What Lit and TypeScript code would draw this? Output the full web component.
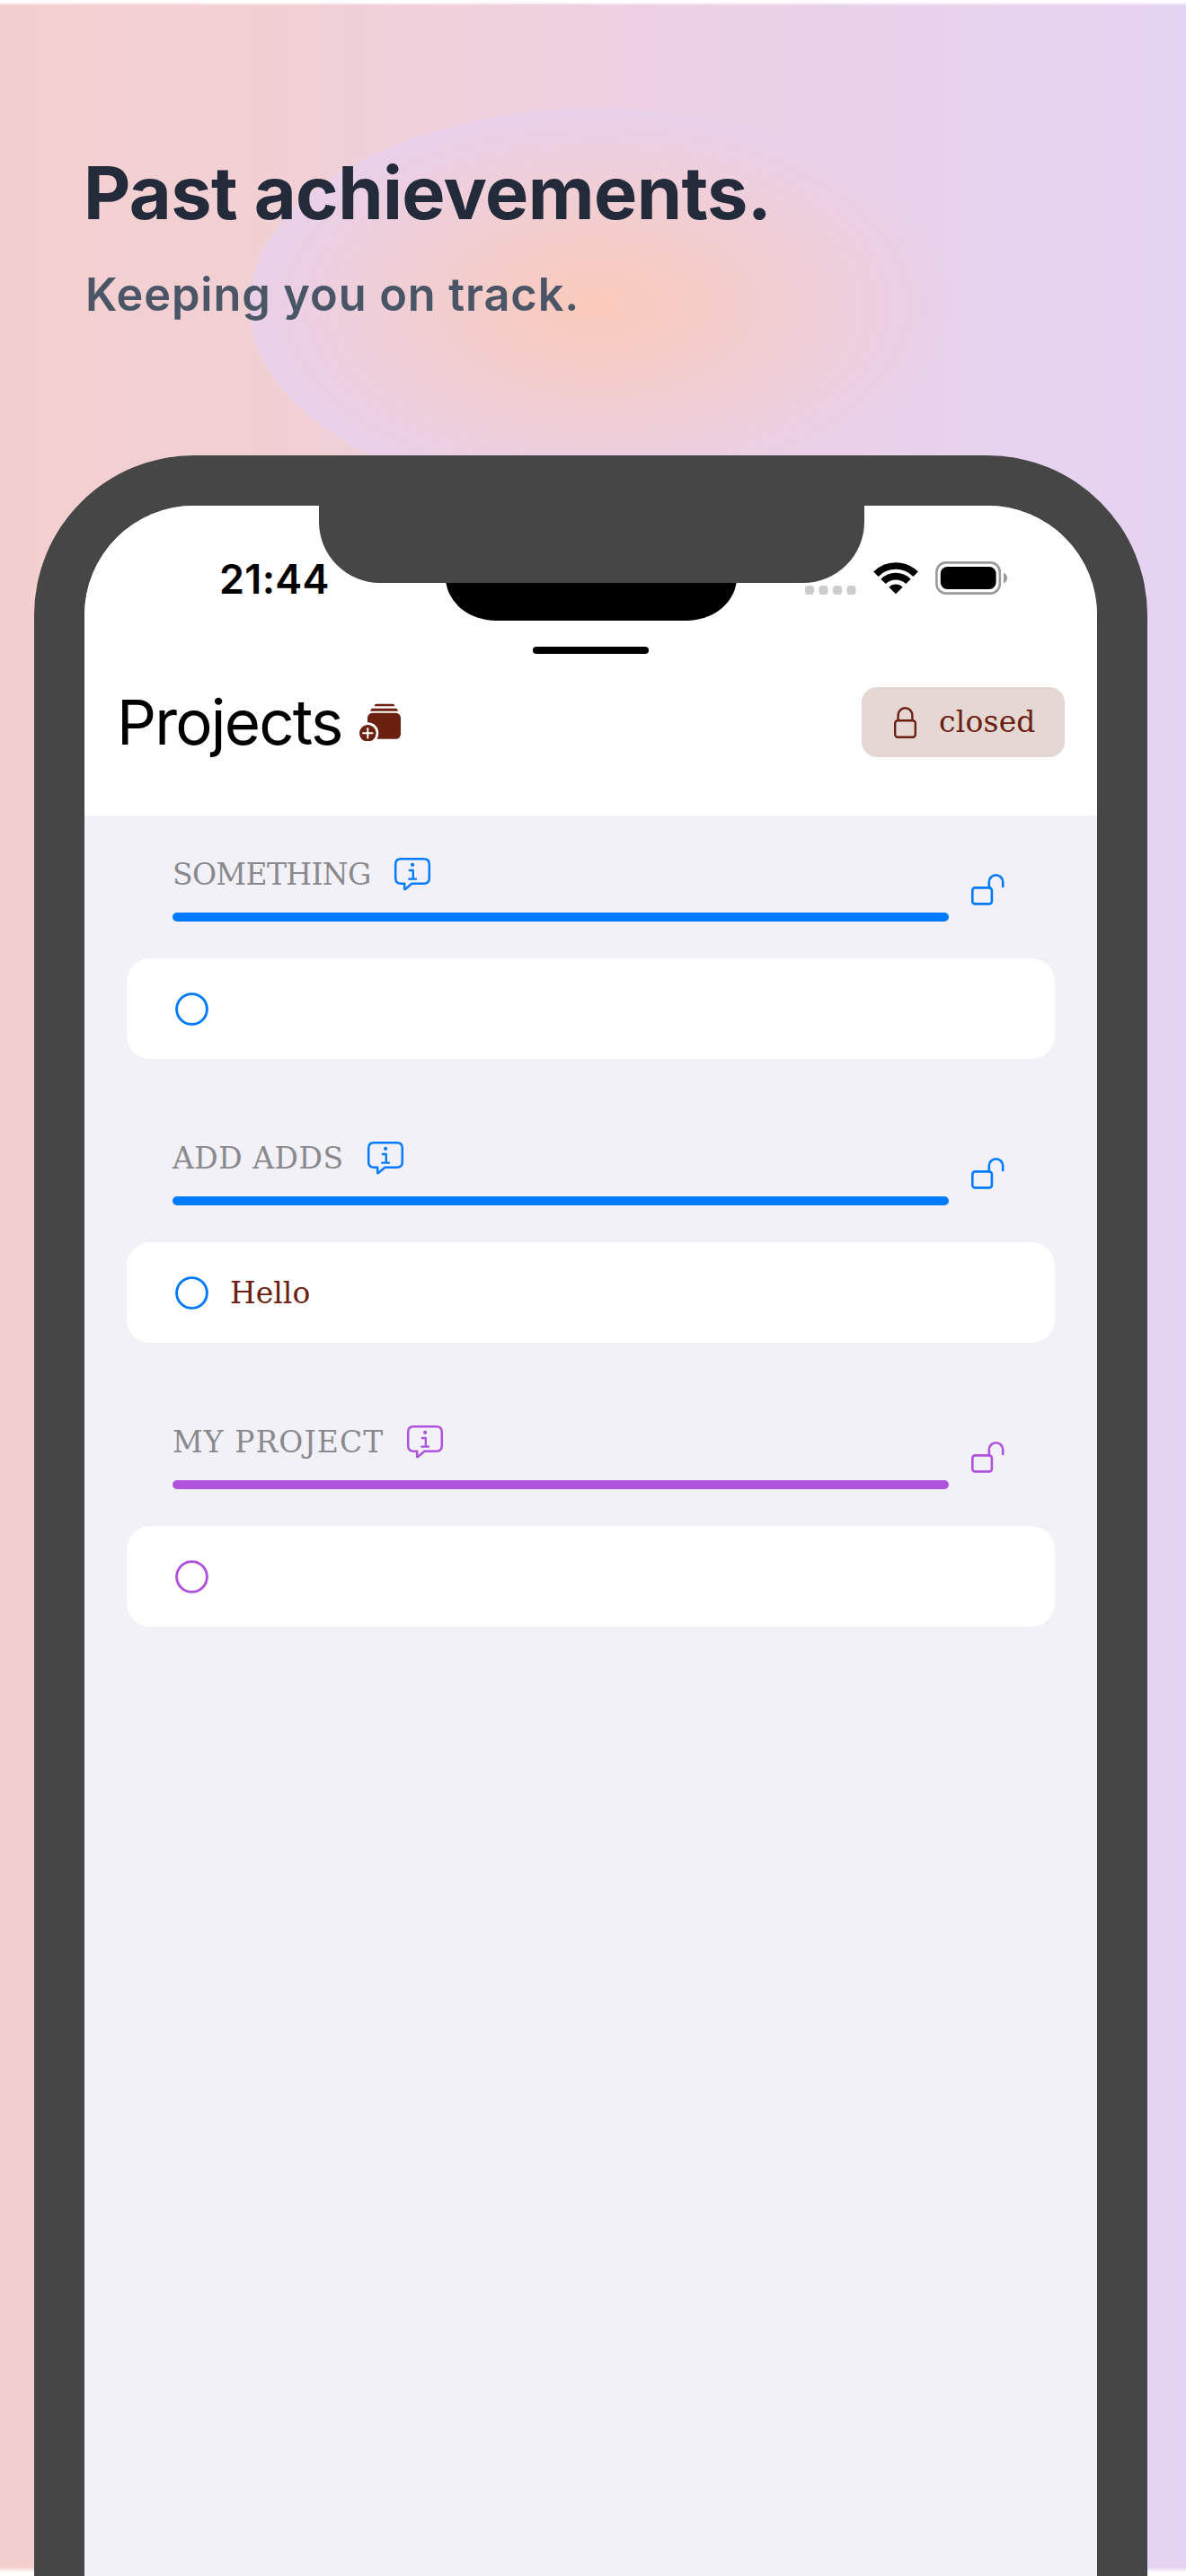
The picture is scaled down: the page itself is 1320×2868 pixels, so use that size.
import { LitElement, html, css, svg } from "lit";
import { customElement, property } from "lit/decorators.js";

interface Project {
  name: string;
  spacing: string;
  color: string;
  item: string;
}

const PROJECTS: Project[] = [
  { name: "SOMETHING", spacing: "-0.65px", color: "#007aff", item: "" },
  { name: "ADD ADDS", spacing: "0.5px", color: "#007aff", item: "Hello" },
  { name: "MY PROJECT", spacing: "1.05px", color: "#af52de", item: "" },
];

const stackPlus = html`<svg width="48" height="44" viewBox="0 0 48 44">
  <g fill="#6b2010">
    <path d="M19 4.4q0-1.6 1.6-1.6h18.8q1.6 0 1.6 1.6v.9H19z" />
    <path d="M14.3 10.7q.3-3 2.6-3h25.4q2.3 0 2.6 3z" />
    <rect x="11" y="12.8" width="37" height="29" rx="5.5" />
    <circle cx="11.3" cy="35.3" r="12" fill="#fff" />
    <circle cx="11.3" cy="35.3" r="9.3" />
  </g>
  <path d="M11.3 30v10.6M6 35.3h10.6" stroke="#fff" stroke-width="2" stroke-linecap="round" />
</svg>`;

const lockClosed = html`<svg width="25" height="35" viewBox="0 0 25 35" fill="none" stroke="#6b2010" stroke-width="2.4">
  <rect x="1.2" y="15.2" width="22.6" height="18.6" rx="3" />
  <path d="M4.6 15.2V9.6a7.9 8.4 0 0 1 15.8 0v5.6" />
</svg>`;

const lockOpen = svg`<rect x="1.3" y="15.4" width="21.6" height="18" rx="3" />
  <path d="M19.8 15.4V8.9a7.7 7.7 0 0 1 15.4 0v5" stroke-linecap="round" />`;

@customElement("project-section")
export class ProjectSection extends LitElement {
  @property({ attribute: false }) project!: Project;

  static styles = css`
    :host { display: block; }
    .head { display: flex; align-items: center; padding: 0 103px 0 98px; gap: 25px; }
    .info { width: 864px; }
    .label { display: flex; align-items: center; height: 36px; gap: 26px; }
    .name {
      font: 33px/36px "DejaVu Serif", serif;
      color: #8a8a8e;
      white-space: nowrap;
      padding-top: 2px;
    }
    .bar { height: 10px; border-radius: 5px; margin-top: 25px; background: currentColor; }
    .card {
      display: flex; align-items: center; gap: 24px;
      margin: 41px 47px 0 46.5px; height: 112px; padding-left: 54.5px;
      border-radius: 26px; background: #fff; box-sizing: border-box;
    }
    .item {
      font: 33px/40px "DejaVu Serif", serif;
      color: #6b2010;
      padding-top: 1px;
    }
    svg { display: block; flex: none; overflow: visible; }
  `;

  render() {
    const p = this.project;
    return html`
      <div class="head" style="color:${p.color}">
        <div class="info">
          <div class="label">
            <span class="name" style="letter-spacing:${p.spacing}">${p.name}</span>
            <svg width="40" height="36" viewBox="0 0 40 36" fill="none" stroke="currentColor" stroke-width="2.5" stroke-linecap="round" stroke-linejoin="round">
              <path d="M7.2 1.3h25.4q6.2 0 6.2 6.2v15q0 6.2-6.2 6.2H19.4l-7.2 6.2q-1 .7-1-.5v-5.7h-4q-6 0-6-6.2v-15q0-6.2 6-6.2z" />
              <path d="M16.8 14h4v9.7M16.2 23.7h7.8" stroke-width="2.3" />
              <circle cx="20.1" cy="7.8" r="2.1" fill="currentColor" stroke="none" />
            </svg>
          </div>
          <div class="bar"></div>
        </div>
        <svg width="37" height="35" viewBox="0 0 37 35" fill="none" stroke="currentColor" stroke-width="2.6">${lockOpen}</svg>
      </div>
      <div class="card" style="color:${p.color}">
        <svg width="37" height="37" viewBox="0 0 37 37"><circle cx="18.5" cy="18.5" r="16.9" fill="none" stroke="currentColor" stroke-width="2.9" /></svg>
        <span class="item">${p.item}</span>
      </div>
    `;
  }
}

@customElement("app-root")
export class AppRoot extends LitElement {
  static styles = css`
    :host {
      display: block; width: 1320px; height: 2868px; overflow: hidden;
      font-family: Inter, "Liberation Sans", sans-serif;
    }
    .page {
      display: flex; flex-direction: column; height: 2868px; overflow: hidden;
      background:
        linear-gradient(#fff 0, #fffafd 3px, #fff0 6px),
        linear-gradient(#fff0 2858px, #fff 2864px),
        radial-gradient(ellipse 388px 220px at 665px 340px, #fbcabb 0, #f6ccc5 24%, #f2ced1 48%, #eecfdc 72%, #ead0e7 94%, #e9d1ea 99.5%, #e9d1ea00 100%),
        linear-gradient(90deg, #f4cfcf 0, #f1d0d4 22%, #eed0df 46%, #e9d1e8 70%, #e7d3ee 86%, #e5d3f3 100%);
    }
    .hero { height: 507px; padding: 0 94px; box-sizing: border-box; flex: none; }
    .title {
      margin: 0; padding-top: 166px; font-size: 81px; line-height: 98px;
      font-weight: 700; color: #232b3a; letter-spacing: -0.6px; margin-left: -1px;
    }
    .subtitle {
      margin: 0; padding-top: 34px; font-size: 50.5px; line-height: 60px;
      font-weight: 600; color: #4a5565; letter-spacing: 0.9px; padding-left: 1px;
    }
    .phone {
      position: relative; flex: none; margin-left: 38px; width: 1239px; height: 2361px; box-sizing: border-box;
      border: 56px solid #464646; border-bottom: 0; border-radius: 178px 178px 0 0; background: #f2f1f7;
    }
    .top { height: 345px; background: #fff; border-radius: 122px 122px 0 0; }
    .notch {
      position: absolute; z-index: 2; top: -1px; left: 260.5px; width: 607px; height: 87px;
      background: #464646; border-radius: 0 0 68px 68px;
    }
    .island {
      position: absolute; z-index: 1; top: 32px; left: 401.5px; width: 324px; height: 96px;
      background: #000; border-radius: 56px / 48px;
    }
    .status { display: flex; justify-content: space-between; align-items: center; height: 52px; padding: 56px 100px 0 150px; }
    .time { font-size: 45px; line-height: 52px; font-weight: 600; color: #000; letter-spacing: 0.3px; }
    .signals { display: flex; gap: 19px; margin-bottom: 3px; }
    .handle { width: 129.5px; height: 8px; border-radius: 4px; background: #000; margin: 49px auto 0; }
    .bar { display: flex; align-items: center; height: 78px; margin-top: 37px; padding: 0 36px; }
    .heading { margin: 0; font-size: 69px; line-height: 78px; font-weight: 400; color: #000; letter-spacing: -1.8px; }
    .add { margin: -2px auto 0 17px; }
    .closed {
      display: flex; align-items: center; width: 226px; height: 78px; box-sizing: border-box;
      padding: 0 0 0 36px; gap: 25px; border: 0; border-radius: 17px; background: #e5d7d4;
      font: 33px/40px "DejaVu Serif", serif; color: #6b2010; letter-spacing: 0.2px;
    }
    .list { display: flex; flex-direction: column; gap: 92px; padding: 47px 0 0; }
    svg { display: block; flex: none; }
  `;

  render() {
    return html`
      <div class="page">
        <div class="hero">
          <h1 class="title">Past achievements.</h1>
          <p class="subtitle">Keeping you on track.</p>
        </div>
        <div class="phone">
          <div class="island"></div>
          <div class="notch"></div>
          <div class="top">
            <div class="status">
              <span class="time">21:44</span>
              <div class="signals">
                <svg width="57" height="37" viewBox="0 0 57 37" fill="#ccc">
                  ${[0, 15.5, 31, 46.5].map((x) => svg`<rect x=${x} y="27" width="10" height="10" rx="3.6" />`)}
                </svg>
                <svg width="50" height="37" viewBox="0 0 50 37">
                  <g fill="none" stroke="#000" stroke-width="7.6">
                    <path d="M2.9 14.2a31.2 31.2 0 0 1 44.2 0" />
                    <path d="M11.1 22.4a19.6 19.6 0 0 1 27.8 0" />
                  </g>
                  <path d="M25 36.3l-7.6-7.6q3.2-3.2 7.6-3.2t7.6 3.2z" />
                </svg>
                <svg width="80" height="37" viewBox="0 0 80 37">
                  <rect x="1.4" y="1.4" width="70.4" height="34.2" rx="10.5" fill="none" stroke="#9a9a9a" stroke-width="2.6" />
                  <rect x="5.8" y="6" width="61.8" height="25" rx="7.5" />
                  <path d="M76 12.8q4 1.6 4 5.8t-4 5.8z" fill="#9a9a9a" />
                </svg>
              </div>
            </div>
            <div class="handle"></div>
            <div class="bar">
              <h2 class="heading">Projects</h2>
              <span class="add">${stackPlus}</span>
              <button class="closed">${lockClosed}<span>closed</span></button>
            </div>
          </div>
          <div class="list">
            ${PROJECTS.map((p) => html`<project-section .project=${p}></project-section>`)}
          </div>
        </div>
      </div>
    `;
  }
}
